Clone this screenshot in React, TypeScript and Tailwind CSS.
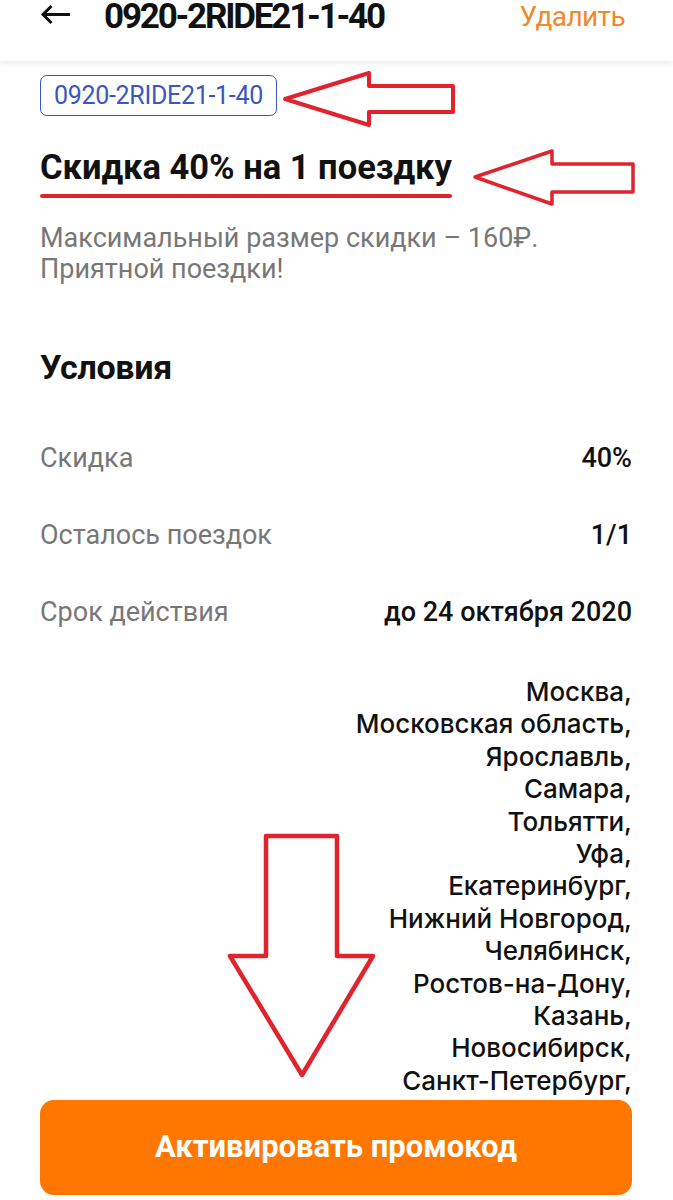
import React from "react";

const cities = [
  "Москва,",
  "Московская область,",
  "Ярославль,",
  "Самара,",
  "Тольятти,",
  "Уфа,",
  "Екатеринбург,",
  "Нижний Новгород,",
  "Челябинск,",
  "Ростов-на-Дону,",
  "Казань,",
  "Новосибирск,",
  "Санкт-Петербург,",
  "Сочи,",
];

const rows = [
  ["Скидка", "40%"],
  ["Осталось поездок", "1/1"],
  ["Срок действия", "до 24 октября 2020"],
];

export default function App() {
  return (
    <div
      className="relative w-[673px] h-[1200px] overflow-hidden bg-white text-[#111]"
      style={{ fontFamily: "Roboto, 'Noto Sans', sans-serif" }}
    >
      {/* Header */}
      <div className="relative z-10 flex h-[61px] items-start bg-white pl-[40px] pr-[48px] shadow-[0_2px_6px_rgba(0,0,0,0.08)]">
        <svg width="32" height="24" viewBox="0 0 32 24" className="mt-[3px] shrink-0">
          <path d="M30 11.5H3 M11.5 3L3 11.5L11.5 20" fill="none" stroke="#111" strokeWidth="3" strokeLinecap="butt" strokeLinejoin="miter" />
        </svg>
        <div className="ml-[32px] mt-[-3px] text-[35px] font-bold leading-[40px] tracking-[-2.2px] text-[#111]">
          0920-2RIDE21-1-40
        </div>
        <div className="ml-auto mt-[-3px] text-[28px] leading-[40px] text-[#EE8A2C] tracking-[-0.6px]">Удалить</div>
      </div>

      {/* Content */}
      <div className="px-[40px] pr-[41px]">
        <div className="mt-[14px] flex">
          <div className="flex h-[41px] items-center rounded-[7px] border-[1.5px] border-[#3B55C2] px-[13px] text-[25px] leading-none tracking-[-0.3px] text-[#3B55C2]">
            0920-2RIDE21-1-40
          </div>
        </div>

        <div className="mt-[32px] inline-block">
          <div className="text-[34.5px] font-bold leading-[38px] tracking-[0px] text-[#111]">
            Скидка 40% на 1 поездку
          </div>
          <div className="mt-[8px] h-[4px] rounded-full bg-[#E0232C]" />
        </div>

        <div className="mt-[25px] text-[27px] leading-[31px] tracking-[0px] text-[#777]">
          Максимальный размер скидки – 160₽.
          <br />
          Приятной поездки!
        </div>

        <div className="mt-[63px] text-[34px] font-bold leading-[38px] tracking-[-0.3px] text-[#111]">Условия</div>

        <div className="mt-[56px] flex flex-col gap-[45px]">
          {rows.map(([l, v]) => (
            <div key={l} className="flex items-center justify-between text-[27px] leading-[32px]">
              <span className="tracking-[0px] text-[#777]">{l}</span>
              <span className="font-medium tracking-[0px] text-[#111]">{v}</span>
            </div>
          ))}
        </div>

        <div
          className="mt-[48px] flex flex-col items-end text-[26px] font-medium leading-[32.4px] text-[#111]"
          style={{ fontFamily: "Inter, 'Noto Sans', sans-serif" }}
        >
          {cities.map((c) => (
            <div key={c}>{c}</div>
          ))}
        </div>
      </div>

      {/* Button */}
      <div className="absolute left-0 right-0 top-[1095px] bottom-0 bg-white px-[40px] pr-[41px] pt-[5px]">
        <button className="flex h-[95px] w-full items-center justify-center rounded-[14px] bg-[#FF7700] text-[31px] font-bold tracking-[0px] text-white">
          Активировать промокод
        </button>
      </div>

      {/* Annotation arrows */}
      <svg className="pointer-events-none absolute left-0 top-0" width="673" height="1200">
        <polygon
          points="285,99 369,73 369,86 453,86 453,112 369,112 369,125"
          fill="none"
          stroke="#E0232C"
          strokeWidth="4"
          strokeLinejoin="round"
        />
        <polygon
          points="475,177 552,151 552,164 633,164 633,192 552,192 552,204"
          fill="none"
          stroke="#E0232C"
          strokeWidth="3.5"
          strokeLinejoin="round"
        />
        <polygon
          points="266,836 337,836 337,956 373,956 302,1075 230,956 266,956"
          fill="none"
          stroke="#E0232C"
          strokeWidth="4.5"
          strokeLinejoin="round"
        />
      </svg>
    </div>
  );
}
